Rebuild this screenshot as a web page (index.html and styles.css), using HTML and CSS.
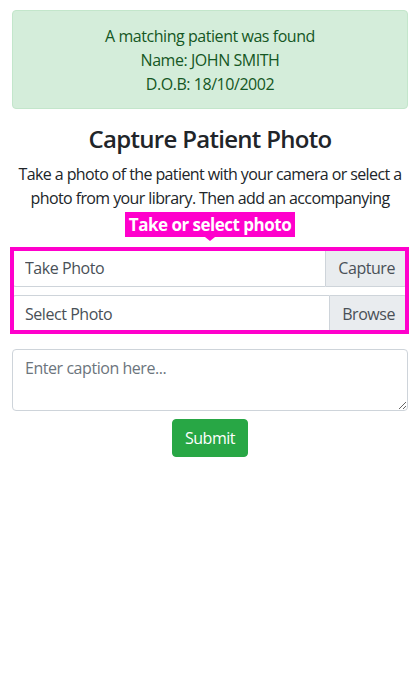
FILE: index.html
```html
<!DOCTYPE html>
<html lang="en">
<head>
<meta charset="utf-8">
<title>Capture Patient Photo</title>
<link rel="stylesheet" href="styles.css">
</head>
<body>
<div class="container">
  <div class="alert">
    <div>A matching patient was found</div>
    <div>Name: JOHN SMITH</div>
    <div>D.O.B: 18/10/2002</div>
  </div>
  <h4 class="title">Capture Patient Photo</h4>
  <p class="intro">Take a photo of the patient with your camera or select a photo from your library. Then add an accompanying</p>
  <div class="hint-row">
    <span class="hint">Take or select photo</span>
  </div>
  <div class="photo-group">
    <div class="input-group">
      <input class="form-control" type="text" value="Take Photo" readonly>
      <span class="addon">Capture</span>
    </div>
    <div class="input-group">
      <input class="form-control" type="text" value="Select Photo" readonly>
      <span class="addon">Browse</span>
    </div>
    <div class="highlight"></div>
  </div>
  <textarea class="caption" rows="2" placeholder="Enter caption here..."></textarea>
  <div class="actions">
    <button class="btn-submit" type="button">Submit</button>
  </div>
</div>
</body>
</html>
```
FILE: styles.css
```css
* { box-sizing: border-box; }
html, body { margin: 0; padding: 0; background: #fff; }
body {
  font-family: "Open Sans", "Noto Sans", sans-serif;
  font-size: 16px;
  line-height: 1.5;
  letter-spacing: -0.45px;
  color: #212529;
}
.container { padding: 10px 12px 0; }
.alert {
  background: #d4edda;
  border: 1px solid #c3e6cb;
  color: #155724;
  border-radius: 4px;
  padding: 13px 20px 12px;
  text-align: center;
  margin-bottom: 16px;
}
.title {
  margin: 0 0 8px;
  font-size: 24px;
  font-weight: 600;
  line-height: 1.2;
  letter-spacing: -0.7px;
  text-align: center;
}
.intro {
  margin: 0;
  text-align: center;
  letter-spacing: -0.6px;
}
.hint-row {
  display: flex;
  justify-content: center;
  align-items: flex-start;
  margin: 2px 0 8px;
  height: 29px;
}
.hint {
  position: relative;
  display: block;
  height: 25px;
  line-height: 25px;
  padding: 0 4px;
  background: #ff00cc;
  color: #fff;
  font-weight: 700;
  font-size: 17px;
  letter-spacing: -0.5px;
}
.hint::after {
  content: "";
  position: absolute;
  left: 50%;
  bottom: -4px;
  margin-left: -5px;
  border-left: 5px solid transparent;
  border-right: 5px solid transparent;
  border-top: 4px solid #ff00cc;
}
.photo-group { position: relative; margin-bottom: 16px; }
.input-group { display: flex; height: 38px; }
.input-group + .input-group { margin-top: 8px; }
.form-control {
  flex: 1;
  min-width: 0;
  height: 38px;
  margin: 0;
  padding: 6px 12px;
  font: inherit;
  letter-spacing: inherit;
  color: #495057;
  background: #fff;
  border: 1px solid #ced4da;
  border-right: 0;
  border-radius: 4px 0 0 4px;
  outline: none;
}
.addon {
  display: flex;
  align-items: center;
  padding: 6px 12px;
  color: #495057;
  background: #e9ecef;
  border: 1px solid #ced4da;
  border-radius: 0 4px 4px 0;
}
.highlight {
  position: absolute;
  left: -2px;
  right: -1px;
  top: -2px;
  bottom: -1px;
  border: 4px solid #ff00cc;
  pointer-events: none;
}
.caption {
  display: block;
  width: 100%;
  height: 62px;
  padding: 6px 12px;
  font: inherit;
  letter-spacing: inherit;
  color: #495057;
  border: 1px solid #ced4da;
  border-radius: 4px;
  resize: vertical;
  margin: 0 0 8px;
}
.caption::placeholder { color: #6c757d; }
.actions { text-align: center; }
.btn-submit {
  font: inherit;
  letter-spacing: inherit;
  color: #fff;
  background: #28a745;
  border: 1px solid #28a745;
  border-radius: 4px;
  padding: 6px 12px;
  height: 38px;
}
```
